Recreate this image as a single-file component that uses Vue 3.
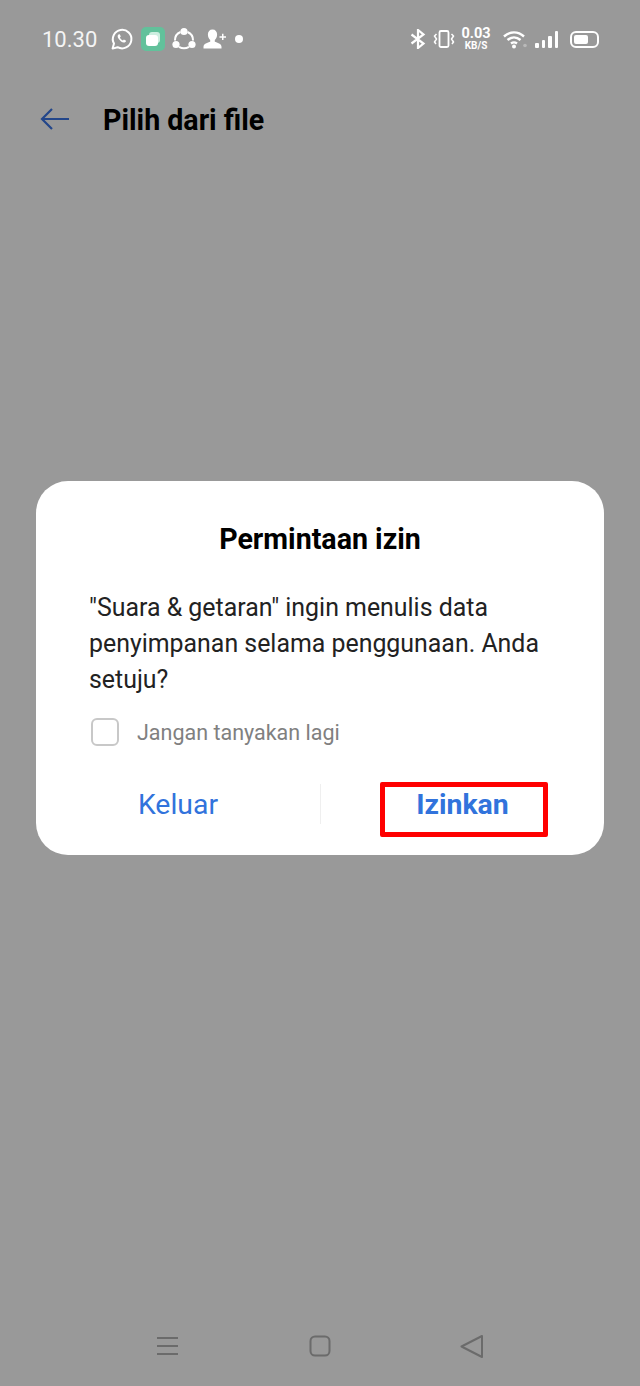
<template>
  <div class="screen">
    <div class="status-bar">
      <span class="status-bar__time">10.30</span>
      <div class="status-bar__apps">
        <svg class="icon" width="24" height="24" viewBox="0 0 24 24" fill="none" stroke="#fff" stroke-width="2">
          <path d="M2.600 21.600l1.400-5a9.300 9.300 0 1 1 3.600 3.600z" stroke-linejoin="round" />
          <path d="M8.400 7.400c-1 1-1 2.600.4 4.600 1.300 1.900 3.200 3.500 5 3.600 1.200 0 2.200-.8 2.300-1.900l-2.200-1.100-1 1c-1.300-.5-2.500-1.700-3-3l.9-1-1-2.400z" fill="#fff" stroke="none" />
        </svg>
        <span class="status-bar__tile">
          <span class="status-bar__tile-back"></span>
          <span class="status-bar__tile-front"></span>
        </span>
        <svg class="icon" width="24" height="24" viewBox="0 0 24 24" fill="none" stroke="#fff" stroke-width="2">
          <path d="M8.500 5a9 9 0 0 0-5.500 8.500M15.500 5a9 9 0 0 1 5.500 8.500M7 19.800a9.500 9.500 0 0 0 10 0" />
          <circle cx="12" cy="4.500" r="3.600" fill="#fff" stroke="none" />
          <circle cx="4" cy="17.500" r="3.600" fill="#fff" stroke="none" />
          <circle cx="20" cy="17.500" r="3.600" fill="#fff" stroke="none" />
        </svg>
        <svg class="icon" width="24" height="24" viewBox="0 0 24 24" fill="#fff">
          <path d="M9.500 2.500c2.900 0 4.600 2.100 4.600 5 0 2.300-1 4.300-2.300 5.400v1.900c2.500.9 6.700 1.800 6.700 5v1.700H0.500v-1.700c0-3.200 4.200-4.100 6.700-5v-1.900C5.900 11.800 4.900 9.800 4.900 7.500c0-2.900 1.700-5 4.600-5z" />
          <path d="M19 6.800h1.500v2.400H23v1.500h-2.500v2.400H19v-2.400h-2.500V9.200H19z" />
        </svg>
        <span class="status-bar__dot"></span>
      </div>
      <div class="status-bar__system">
        <svg class="icon" width="16" height="20" viewBox="0 0 16 20" fill="none" stroke="#fff" stroke-width="2.200">
          <path d="M1.500 5.500l12 9-5.500 4.500V1l5.500 4.500-12 9" />
        </svg>
        <svg class="icon status-bar__vibrate" width="22" height="20" viewBox="0 0 22 20" fill="none" stroke="#fff" stroke-width="1.800">
          <rect x="6.500" y="2" width="9" height="16" rx="1.500" />
          <path d="M3.500 5l-2 2 2 3-2 3 1.500 2M18.500 5l2 2-2 3 2 3-1.500 2" stroke-width="1.500" />
        </svg>
        <span class="status-bar__speed">
          <span class="status-bar__speed-value">0.03</span>
          <span class="status-bar__speed-unit">KB/S</span>
        </span>
        <svg class="icon status-bar__wifi" width="25" height="20" viewBox="0 0 25 20" fill="none" stroke="#fff" stroke-width="2.400">
          <path d="M1 7.500c6-5.500 14-5.500 20 0M4.500 11c4-3.500 9-3.500 13 0M8 14.500c2-1.500 4-1.500 6 0" />
          <circle cx="11" cy="17.500" r="2" fill="#fff" stroke="none" />
          <circle cx="22" cy="16.500" r="1.800" fill="#b9b9b9" stroke="none" />
        </svg>
        <div class="status-bar__signal">
          <span class="status-bar__bar status-bar__bar--1"></span>
          <span class="status-bar__bar status-bar__bar--2"></span>
          <span class="status-bar__bar status-bar__bar--3"></span>
          <span class="status-bar__bar status-bar__bar--4"></span>
        </div>
        <span class="status-bar__battery">
          <span class="status-bar__battery-level"></span>
        </span>
      </div>
    </div>

    <header class="top-bar">
      <svg class="top-bar__back" width="30" height="24" viewBox="0 0 30 24" fill="none" stroke="#23468a" stroke-width="2.200">
        <path d="M29 12H2M12 2L2 12l10 10" />
      </svg>
      <h1 class="top-bar__title">Pilih dari file</h1>
    </header>

    <section class="dialog">
      <h2 class="dialog__title">Permintaan izin</h2>
      <p class="dialog__message">"Suara &amp; getaran" ingin menulis data penyimpanan selama penggunaan. Anda setuju?</p>
      <label class="dialog__check">
        <span class="dialog__box"></span>
        <span>Jangan tanyakan lagi</span>
      </label>
      <div class="dialog__actions">
        <span class="dialog__action">Keluar</span>
        <span class="dialog__action dialog__action--primary">
          Izinkan
          <span class="dialog__highlight"></span>
        </span>
      </div>
    </section>

    <nav class="nav-bar">
      <svg width="24" height="20" viewBox="0 0 24 20" fill="none" stroke="#6b6b6b" stroke-width="2">
        <path d="M1 2h21M1 10h21M1 18h21" />
      </svg>
      <svg width="22" height="22" viewBox="0 0 22 22" fill="none" stroke="#6b6b6b" stroke-width="2">
        <rect x="1.500" y="1.500" width="19" height="19" rx="4.500" />
      </svg>
      <svg width="24" height="24" viewBox="0 0 24 24" fill="none" stroke="#6b6b6b" stroke-width="2" stroke-linejoin="round">
        <path d="M22 2L1.500 12.500 22 23z" />
      </svg>
    </nav>
  </div>
</template>

<script setup>
</script>

<style>
html,
body {
  margin: 0;
  background: #999;
}
</style>

<style scoped>
.screen {
  width: 640px;
  height: 1386px;
  background: #999;
  display: flex;
  flex-direction: column;
  font-family: Roboto, "Liberation Sans", sans-serif;
  overflow: hidden;
}

.icon {
  display: block;
  flex: none;
}

.status-bar {
  height: 78px;
  box-sizing: border-box;
  padding: 0 41px 0 42px;
  display: flex;
  align-items: center;
  color: #fff;
}

.status-bar__time {
  font-size: 22px;
  width: 68px;
  color: #f4f4f4;
}

.status-bar__apps {
  display: flex;
  align-items: center;
  gap: 7px;
}

.status-bar__tile {
  position: relative;
  width: 24px;
  height: 24px;
  border-radius: 5px;
  background: #62c19b;
}

.status-bar__tile-back,
.status-bar__tile-front {
  position: absolute;
  border-radius: 3px;
}

.status-bar__tile-back {
  left: 8px;
  top: 5px;
  width: 11px;
  height: 11px;
  background: #cdeee0;
}

.status-bar__tile-front {
  left: 5px;
  top: 8px;
  width: 12px;
  height: 11px;
  background: #fff;
}

.status-bar__dot {
  width: 8px;
  height: 8px;
  margin-left: 1px;
  border-radius: 50%;
  background: #fff;
}

.status-bar__system {
  margin-left: auto;
  display: flex;
  align-items: center;
}

.status-bar__vibrate {
  margin-left: 7px;
}

.status-bar__speed {
  margin-left: 6px;
  width: 30px;
  display: flex;
  flex-direction: column;
  align-items: center;
  font-weight: 700;
  line-height: 1;
}

.status-bar__speed-value {
  font-size: 14.500px;
}

.status-bar__speed-unit {
  font-size: 10px;
}

.status-bar__wifi {
  margin-left: 12px;
}

.status-bar__signal {
  margin-left: 7px;
  display: flex;
  align-items: flex-end;
  gap: 3px;
  height: 18px;
}

.status-bar__bar {
  width: 3.500px;
  background: #fff;
  border-radius: 1px;
}

.status-bar__bar--1 {
  height: 5px;
}

.status-bar__bar--2 {
  height: 8px;
}

.status-bar__bar--3 {
  height: 12px;
}

.status-bar__bar--4 {
  height: 17px;
}

.status-bar__battery {
  margin-left: 12px;
  width: 29px;
  height: 17px;
  box-sizing: border-box;
  border: 2px solid #fff;
  border-radius: 6px;
  padding: 2px;
  display: flex;
}

.status-bar__battery-level {
  width: 14px;
  background: #fff;
  border-radius: 2px;
}

.top-bar {
  height: 82px;
  display: flex;
  align-items: center;
  padding-left: 40px;
}

.top-bar__back {
  display: block;
}

.top-bar__title {
  margin: 2px 0 0 33px;
  font-size: 28.600px;
  font-weight: 700;
  color: #000;
  line-height: 1;
}

.dialog {
  margin: 321px 36px 0;
  height: 374px;
  box-sizing: border-box;
  background: #fff;
  border-radius: 32px;
  display: flex;
  flex-direction: column;
}

.dialog__title {
  margin: 42px 0 0;
  font-size: 28.600px;
  font-weight: 700;
  line-height: 32px;
  color: #000;
  text-align: center;
}

.dialog__message {
  margin: 35px 53px 0;
  font-size: 24.900px;
  line-height: 36px;
  color: #222;
}

.dialog__check {
  margin: 18px 0 0 55px;
  display: flex;
  align-items: center;
  gap: 18px;
  font-size: 21.500px;
  color: #808080;
  height: 32px;
}

.dialog__box {
  width: 28px;
  height: 28px;
  box-sizing: border-box;
  border: 2px solid #c8c8c8;
  border-radius: 6px;
}

.dialog__actions {
  margin-top: 36px;
  display: grid;
  grid-template-columns: 1fr 1fr;
}

.dialog__action {
  position: relative;
  height: 40px;
  display: flex;
  align-items: center;
  justify-content: center;
  font-size: 28.400px;
  color: #3173dc;
}

.dialog__action--primary {
  font-weight: 700;
  border-left: 1px solid #efefef;
}

.dialog__highlight {
  position: absolute;
  left: 59px;
  top: -2px;
  width: 168px;
  height: 55px;
  box-sizing: border-box;
  border: 5px solid #f00;
  border-radius: 2px;
}

.nav-bar {
  margin-top: auto;
  height: 80px;
  display: grid;
  grid-template-columns: repeat(3, 152px);
  justify-content: center;
  justify-items: center;
  align-items: center;
  padding-top: 2px;
}
</style>
